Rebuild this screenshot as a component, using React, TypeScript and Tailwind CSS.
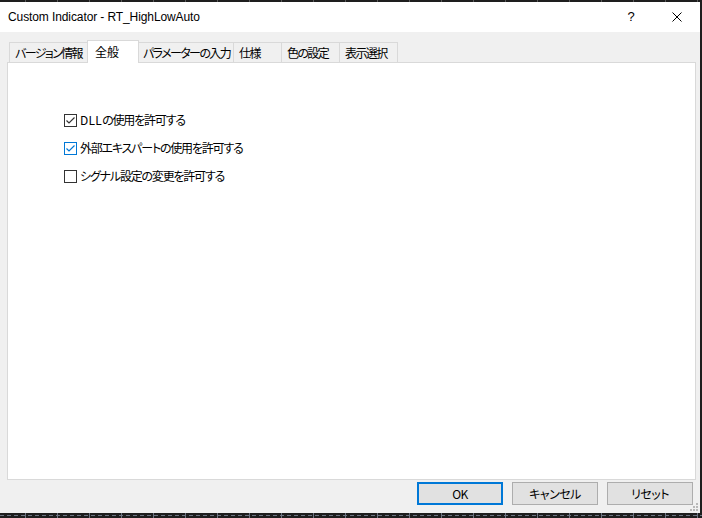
import React from "react";

const jp = "font-['Noto_Sans_CJK_JP','Noto_Sans',sans-serif] [font-feature-settings:'palt']";

function Check({ checked, blue }: { checked: boolean; blue?: boolean }) {
  const c = blue ? "#0078d7" : "#333333";
  return (
    <svg width="13" height="13" viewBox="0 0 13 13" className="shrink-0">
      <rect x="0.5" y="0.5" width="12" height="12" fill="#ffffff" stroke={c} strokeWidth="1" />
      {checked && (
        <polyline points="2.5,6.5 5,9 10.5,3.5" fill="none" stroke={c} strokeWidth="1.2" />
      )}
    </svg>
  );
}

function Tab({ label, w, selected }: { label: string; w: number; selected?: boolean }) {
  if (selected) {
    return (
      <div
        style={{ width: w + 4 }}
        className="relative z-10 -mx-[2px] h-[23px] -mb-px bg-white border-l border-t border-r border-[#d9d9d9] flex items-start pt-[2px] pl-[7px] text-[12px] text-black whitespace-nowrap shrink-0"
      >
        {label}
      </div>
    );
  }
  return (
    <div
      style={{ width: w }}
      className="h-[20px] bg-[#f0f0f0] border-l border-t border-[#d9d9d9] last:border-r flex items-center pl-[5px] text-[12px] tracking-[-1.6px] text-black whitespace-nowrap overflow-hidden shrink-0"
    >
      {label}
    </div>
  );
}

export default function App() {
  const ticks = Array.from({ length: 22 });
  return (
    <div className="w-[702px] h-[518px] flex flex-col bg-[#1e1e1e] overflow-hidden">
      <div className="h-[2px] shrink-0 flex pl-[25px] gap-[31px]">
        {ticks.map((_, i) => (
          <span key={i} className="w-px h-[2px] bg-[#5a5a5a] shrink-0" />
        ))}
      </div>
      <div className="flex flex-1 min-h-0">
        <div className="w-[700px] flex flex-col bg-[#f0f0f0]">
          <div className="h-[30px] shrink-0 bg-white flex items-center">
            <div className="flex-1 pl-[8px] text-[12px] text-black font-['Liberation_Sans',sans-serif] tracking-[-0.1px]">
              Custom Indicator - RT_HighLowAuto
            </div>
            <div className="w-[46px] h-full flex items-center justify-center text-[13px] text-black font-['Liberation_Sans',sans-serif]">
              ?
            </div>
            <div className="w-[46px] h-full flex items-center justify-center">
              <svg width="10" height="10" viewBox="0 0 10 10">
                <path d="M0.5 0.5 L9.5 9.5 M9.5 0.5 L0.5 9.5" stroke="#000" strokeWidth="1" fill="none" />
              </svg>
            </div>
          </div>
          <div className={`flex-1 flex flex-col pl-[7px] pr-[4px] pt-[8px] pb-[8px] relative ${jp}`}>
            <div className="h-[22px] flex items-end pl-[2px]">
              <Tab label="バージョン情報" w={80} />
              <Tab label="全般" w={48} selected />
              <Tab label="パラメーターの入力" w={96} />
              <Tab label="仕様" w={48} />
              <Tab label="色の設定" w={58} />
              <Tab label="表示選択" w={59} />
            </div>
            <div className="h-[418px] bg-white border border-[#d9d9d9] flex flex-col pl-[56px] pt-[43px] tracking-[-1.2px]">
              <div className="h-[28px] flex items-center gap-[3px] text-[12px] text-black">
                <Check checked />
                <span>
                  <span className="tracking-[0.3px]">DLL</span>の使用を許可する
                </span>
              </div>
              <div className="h-[28px] flex items-center gap-[3px] text-[12px] text-black">
                <Check checked blue />
                <span>外部エキスパートの使用を許可する</span>
              </div>
              <div className="h-[28px] flex items-center gap-[3px] text-[12px] text-black">
                <Check checked={false} />
                <span>シグナル設定の変更を許可する</span>
              </div>
            </div>
            <div className="mt-[2px] h-[23px] flex justify-end gap-[9px] pr-[3px] tracking-[-0.5px]">
              <div className="w-[86px] h-[23px] bg-[#e1e1e1] border-2 border-[#0078d7] flex items-center justify-center text-[12px] text-black">
                OK
              </div>
              <div className="w-[86px] h-[23px] bg-[#e1e1e1] border border-[#adadad] flex items-center justify-center text-[12px] text-black">
                キャンセル
              </div>
              <div className="w-[86px] h-[23px] bg-[#e1e1e1] border border-[#adadad] flex items-center justify-center text-[12px] text-black">
                リセット
              </div>
            </div>
            <svg width="10" height="10" viewBox="0 0 10 10" className="absolute right-[1px] bottom-[1px]">
              <rect x="7" y="1" width="2" height="2" fill="#b8b8b8" />
              <rect x="4" y="4" width="2" height="2" fill="#b8b8b8" />
              <rect x="7" y="4" width="2" height="2" fill="#b8b8b8" />
              <rect x="1" y="7" width="2" height="2" fill="#b8b8b8" />
              <rect x="4" y="7" width="2" height="2" fill="#b8b8b8" />
              <rect x="7" y="7" width="2" height="2" fill="#b8b8b8" />
            </svg>
          </div>
        </div>
        <div className="w-[2px] bg-[#1e1e1e]" />
      </div>
      <div className="h-[5px] shrink-0 relative">
        <div className="mt-[2px] h-[1px] bg-[repeating-linear-gradient(90deg,#6b7280_0_4px,transparent_4px_7px)]" />
        <div className="absolute inset-0 flex pl-[25px] gap-[31px]">
          {ticks.map((_, i) => (
            <span key={i} className="w-px h-[5px] bg-[#6b7280] shrink-0" />
          ))}
        </div>
      </div>
    </div>
  );
}
